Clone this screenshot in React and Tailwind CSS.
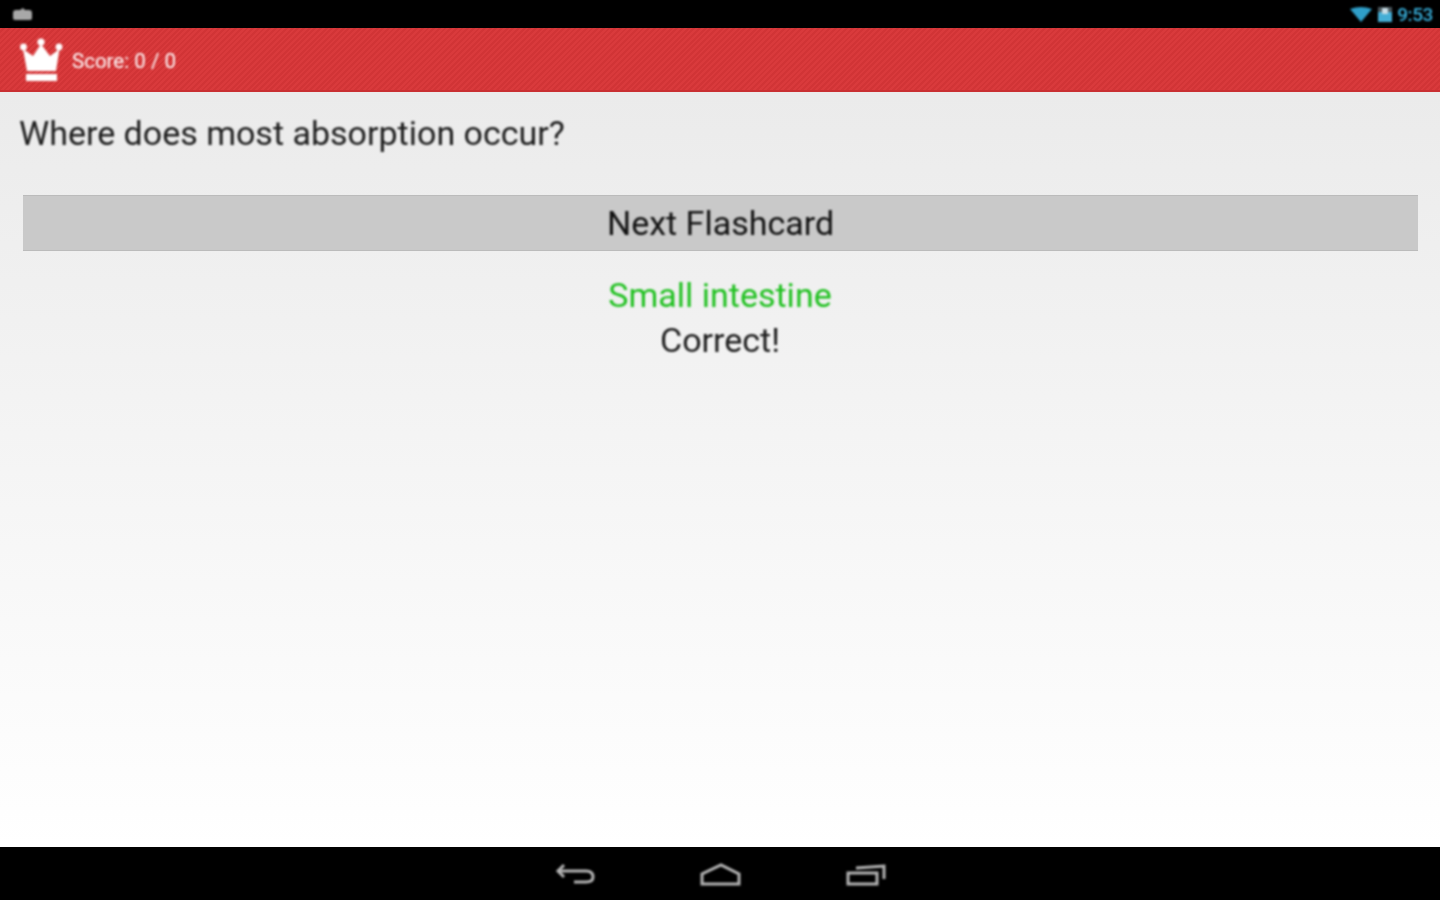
import React from "react";

function Crown() {
  return (
    <svg width="44" height="45" viewBox="0 0 44 45" className="shrink-0 blur-[0.8px]">
      <circle cx="21" cy="5" r="3.6" fill="#fff" />
      <circle cx="3.5" cy="10" r="3.4" fill="#fff" />
      <circle cx="39" cy="10" r="3.4" fill="#fff" />
      <path d="M3 12 L13 19 L21 7 L30 19 L39.5 12 L36 34 L7 34 Z" fill="#fff" />
      <rect x="6" y="37" width="31" height="7" fill="#fff" />
    </svg>
  );
}

function StatusBar() {
  return (
    <div className="h-7 bg-black flex items-center justify-between pl-3 pr-[7px] shrink-0">
      <svg width="21" height="16" viewBox="0 0 21 16" className="blur-[1.2px]">
        <path d="M1 7 Q1 4 4 4 L8 4 L11 2 L13 4 L17 4 Q20 4 20 7 L20 12 Q20 14 18 14 L3 14 Q1 14 1 12 Z" fill="#a8a8a8" />
      </svg>
      <div className="flex items-center">
        <svg width="22" height="15" viewBox="0 0 22 15" className="blur-[1px]">
          <path d="M0 2 Q11 -2 22 2 L11 15 Z" fill="#2f9fc9" />
        </svg>
        <svg width="14" height="15" viewBox="0 0 14 15" className="ml-[6px] blur-[1px]">
          <rect x="0" y="0" width="14" height="5" fill="#4c5a60" />
          <rect x="0" y="5" width="14" height="10" fill="#45aed5" />
          <rect x="4" y="1" width="6" height="6" fill="#c9dde5" />
        </svg>
        <span className="ml-[5px] text-[19px] font-medium leading-none tracking-[-0.4px] text-[#38b0dc] blur-[1px]">9:53</span>
      </div>
    </div>
  );
}

function NavBar() {
  return (
    <div className="h-[53px] bg-black flex items-center justify-center gap-[104px] shrink-0 pt-[3px]">
      <svg width="42" height="26" viewBox="0 0 42 26" fill="none" stroke="#b4b4b4" strokeWidth="3" className="blur-[1px]">
        <path d="M10 3 L4 9 L10 15" />
        <path d="M4 9 L32 9 Q39 9 39 15 Q39 20 32 20 L20 20" />
      </svg>
      <svg width="42" height="24" viewBox="0 0 42 24" fill="none" stroke="#b4b4b4" strokeWidth="3" className="blur-[1px]">
        <path d="M2 21 L39 21 L39 11 L21 2 L2 11 Z" />
      </svg>
      <svg width="41" height="24" viewBox="0 0 41 24" fill="none" stroke="#b4b4b4" strokeWidth="3" className="blur-[1px]">
        <path d="M2 10 L31 10 L31 21 L2 21 Z" />
        <path d="M10 5 L38 3 L38 16" />
      </svg>
    </div>
  );
}

export default function App() {
  return (
    <div className="w-[1440px] h-[900px] flex flex-col overflow-hidden font-['Roboto',sans-serif]">
      <StatusBar />
      <div className="h-[64px] shrink-0 flex items-center pl-[20px] border-b-2 border-[#c92f31] bg-[repeating-linear-gradient(135deg,#d93a3c_0px,#d93a3c_2px,#d13436_2px,#d13436_4px)]">
        <Crown />
        <span className="ml-[8px] mt-[4px] text-[20.5px] text-white blur-[0.8px]">Score: 0 / 0</span>
      </div>
      <div className="flex-1 flex flex-col bg-gradient-to-b from-[#ebebeb] to-white">
        <p className="mt-[20px] ml-[19px] text-[34px] leading-[42px] text-[#1c1c1c] blur-[0.8px]">Where does most absorption occur?</p>
        <button className="mt-[41px] ml-[23px] mr-[22px] h-[56px] bg-[#c9c9c9] border-y border-[#bbbbbb] text-[34px] text-[#111]">
          <span className="block blur-[0.8px]">Next Flashcard</span>
        </button>
        <p className="mt-[22px] text-center text-[34px] leading-[45px] text-[#1fc01f] blur-[0.8px]">Small intestine</p>
        <p className="text-center text-[34px] leading-[45px] text-[#1c1c1c] blur-[0.8px]">Correct!</p>
      </div>
      <NavBar />
    </div>
  );
}
